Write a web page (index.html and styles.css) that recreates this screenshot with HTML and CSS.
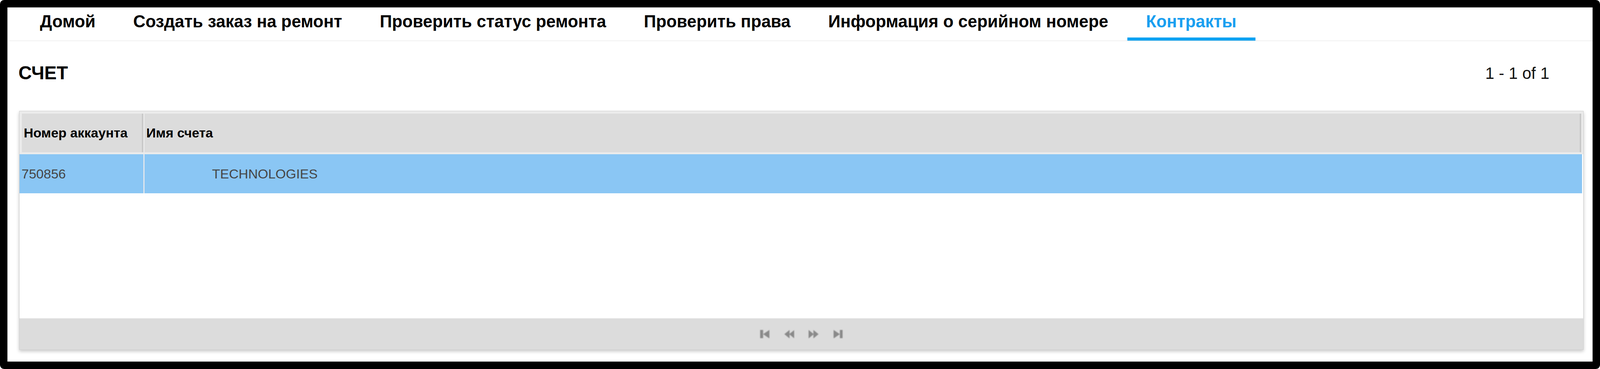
FILE: index.html
```html
<!DOCTYPE html>
<html lang="ru">
<head>
<meta charset="utf-8">
<title>Контракты</title>
<link rel="stylesheet" href="styles.css">
</head>
<body>
<div class="frame">
  <nav class="nav">
    <a class="tab">Домой</a>
    <a class="tab">Создать заказ на ремонт</a>
    <a class="tab">Проверить статус ремонта</a>
    <a class="tab">Проверить права</a>
    <a class="tab">Информация о серийном номере</a>
    <a class="tab active">Контракты</a>
  </nav>
  <div class="title-row">
    <h1 class="title">СЧЕТ</h1>
    <div class="pager-info">1 - 1 of 1</div>
  </div>
  <div class="grid">
    <div class="grid-head">
      <div class="hcell col-acc">Номер аккаунта</div>
      <div class="hcell col-name">Имя счета</div>
    </div>
    <div class="grid-row">
      <div class="cell">750856</div>
      <div class="cell"><span class="mask"></span>TECHNOLOGIES</div>
    </div>
    <div class="grid-empty"></div>
    <div class="grid-foot">
      <span class="pbtn"><svg class="ico" viewBox="0 0 25 23"><rect x="0" y="0" width="8" height="23"/><polygon points="8,11.5 25,0 25,23"/></svg></span>
      <span class="pbtn"><svg class="ico ico-wide" viewBox="0 0 27 23"><polygon points="0,11.5 14,0 14,23"/><polygon points="13,11.5 27,0 27,23"/></svg></span>
      <span class="pbtn"><svg class="ico ico-wide" viewBox="0 0 27 23"><polygon points="27,11.5 13,0 13,23"/><polygon points="14,11.5 0,0 0,23"/></svg></span>
      <span class="pbtn"><svg class="ico" viewBox="0 0 25 23"><rect x="17" y="0" width="8" height="23"/><polygon points="17,11.5 0,0 0,23"/></svg></span>
    </div>
  </div>
</div>
</body>
</html>
```
FILE: styles.css
```css
:root {
  --u: calc(100vw / 4332);
}
html, body {
  margin: 0;
  padding: 0;
  width: 100%;
  height: 100%;
  overflow: hidden;
  background: #ffffff;
}
body {
  font-family: "Liberation Sans", Arial, sans-serif;
  color: #000;
}
.frame {
  box-sizing: border-box;
  width: 100%;
  height: 100vh;
  border: calc(21 * var(--u)) solid #000;
  border-radius: calc(11 * var(--u));
  background: #fff;
  display: flex;
  flex-direction: column;
  overflow: hidden;
}
.nav {
  flex: none;
  display: flex;
  margin-left: calc(5 * var(--u));
  padding: calc(12 * var(--u)) 0 0 calc(32 * var(--u));
  border-bottom: calc(2 * var(--u)) solid #e3e3e3;
}
.tab {
  display: block;
  padding: 0 calc(51 * var(--u)) calc(15 * var(--u));
  font-size: calc(46 * var(--u));
  font-weight: 700;
  line-height: calc(54 * var(--u));
  color: #000;
  white-space: nowrap;
  border-bottom: calc(9 * var(--u)) solid transparent;
}
.tab.active {
  color: #1a9ff0;
  border-bottom-color: #0ea2f2;
}
.title-row {
  flex: none;
  display: flex;
  justify-content: space-between;
  align-items: center;
  height: calc(80 * var(--u));
  margin-top: calc(48 * var(--u));
  padding: 0 calc(117 * var(--u)) 0 calc(30 * var(--u));
}
.title {
  margin: 0;
  font-size: calc(50 * var(--u));
  font-weight: 700;
  line-height: calc(58 * var(--u));
}
.pager-info {
  font-size: calc(44 * var(--u));
  line-height: calc(52 * var(--u));
  color: #111;
  white-space: nowrap;
}
.grid {
  box-sizing: border-box;
  flex: 1;
  min-height: 0;
  margin: calc(62 * var(--u)) calc(24 * var(--u)) calc(32 * var(--u)) calc(32 * var(--u));
  border: calc(2 * var(--u)) solid #d0d0d0;
  display: flex;
  flex-direction: column;
  background: #fff;
  box-shadow: 0 calc(4 * var(--u)) calc(9 * var(--u)) rgba(0, 0, 0, 0.22);
}
.grid-head {
  flex: none;
  display: flex;
  gap: calc(3 * var(--u));
  padding: calc(6 * var(--u)) calc(6 * var(--u)) calc(5 * var(--u)) calc(6 * var(--u));
  background: #ebebeb;
}
.hcell {
  box-sizing: border-box;
  height: calc(105 * var(--u));
  line-height: calc(105 * var(--u));
  padding: 0 calc(5 * var(--u));
  background: #dcdcdc;
  border-right: calc(5 * var(--u)) solid #c9c9c9;
  font-size: calc(36 * var(--u));
  font-weight: 700;
  white-space: nowrap;
}
.col-acc {
  width: calc(329 * var(--u));
}
.col-name {
  flex: 1;
}
.grid-row {
  flex: none;
  display: grid;
  grid-template-columns: calc(335 * var(--u)) 1fr;
  column-gap: calc(3 * var(--u));
  height: calc(106 * var(--u));
  margin-right: calc(3 * var(--u));
  background: #e4e8ec;
}
.cell {
  background: #8ac6f4;
  line-height: calc(106 * var(--u));
  padding: 0 calc(5 * var(--u));
  font-size: calc(36 * var(--u));
  color: #454545;
  white-space: nowrap;
}
.mask {
  display: inline-block;
  width: calc(178 * var(--u));
}
.grid-empty {
  flex: 1;
}
.grid-foot {
  flex: none;
  box-sizing: border-box;
  height: calc(84 * var(--u));
  border-top: calc(1 * var(--u)) solid #e6e6e6;
  background: #dcdcdc;
  display: flex;
  justify-content: center;
  align-items: center;
}
.pbtn {
  width: calc(66 * var(--u));
  display: flex;
  justify-content: center;
  align-items: center;
}
.ico {
  width: calc(25 * var(--u));
  height: calc(23 * var(--u));
  fill: #8a8a8a;
  filter: blur(0.8px);
}
.ico-wide {
  width: calc(27 * var(--u));
}
```
